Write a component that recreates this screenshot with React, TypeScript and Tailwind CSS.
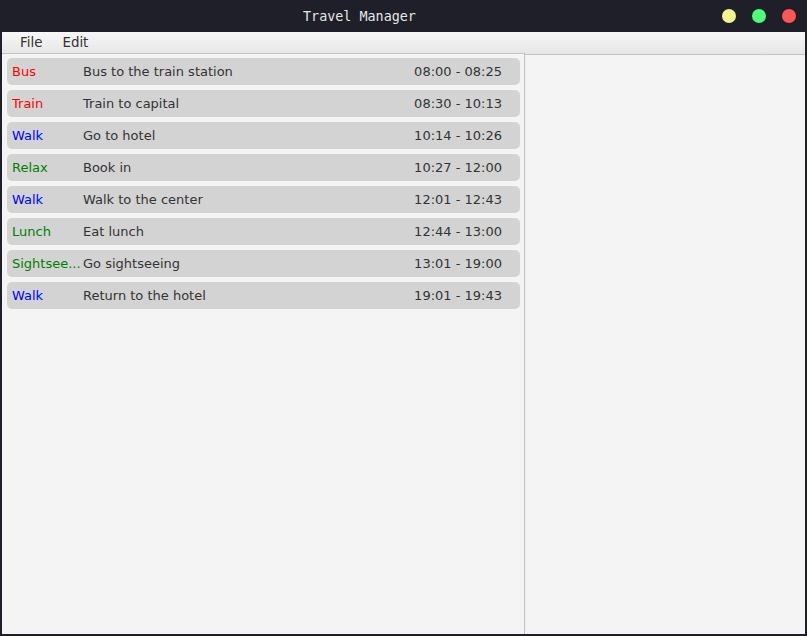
import React from 'react';

type Entry = { kind: string; color: string; text: string; time: string };

const ENTRIES: Entry[] = [
  { kind: 'Bus', color: 'text-[#ff0000]', text: 'Bus to the train station', time: '08:00 - 08:25' },
  { kind: 'Train', color: 'text-[#ff0000]', text: 'Train to capital', time: '08:30 - 10:13' },
  { kind: 'Walk', color: 'text-[#0000ff]', text: 'Go to hotel', time: '10:14 - 10:26' },
  { kind: 'Relax', color: 'text-[#008000]', text: 'Book in', time: '10:27 - 12:00' },
  { kind: 'Walk', color: 'text-[#0000ff]', text: 'Walk to the center', time: '12:01 - 12:43' },
  { kind: 'Lunch', color: 'text-[#008000]', text: 'Eat lunch', time: '12:44 - 13:00' },
  { kind: 'Sightseeing', color: 'text-[#008000]', text: 'Go sightseeing', time: '13:01 - 19:00' },
  { kind: 'Walk', color: 'text-[#0000ff]', text: 'Return to the hotel', time: '19:01 - 19:43' },
];

function Row({ entry }: { entry: Entry }) {
  return (
    <div className="h-[27px] flex items-center rounded-[5px] bg-[#d3d3d3] pl-[5px] pr-[18px] text-[13px]">
      <span className={`w-[71px] truncate ${entry.color}`}>
        {entry.kind === 'Sightseeing' ? 'Sightsee...' : entry.kind}
      </span>
      <span className="flex-1 text-[#333333]">{entry.text}</span>
      <span className="text-[#333333]">{entry.time}</span>
    </div>
  );
}

export default function App() {
  return (
    <div
      className="w-[807px] h-[636px] bg-[#1e1f29] flex flex-col"
      style={{ fontFamily: '"DejaVu Sans", sans-serif' }}
    >
      <div className="h-8 flex items-center shrink-0 relative">
        <div
          className="flex-1 text-center text-[13.4px] text-[#e6e6e6] pl-[2px] pr-[90px] mt-[2px]"
          style={{ fontFamily: '"DejaVu Sans Mono", monospace' }}
        >
          Travel Manager
        </div>
        <div className="absolute right-[11px] top-[9px] flex gap-4">
          <span className="w-[14px] h-[14px] rounded-full bg-[#f1f58f]" />
          <span className="w-[14px] h-[14px] rounded-full bg-[#50fa7b]" />
          <span className="w-[14px] h-[14px] rounded-full bg-[#ff5555]" />
        </div>
      </div>
      <div className="flex-1 mx-[2px] mb-[2px] bg-[#f4f4f4] flex flex-col min-h-0">
        <div className="h-[23px] shrink-0 flex items-center gap-[20px] pl-[18px] text-[13.4px] text-[#333333] bg-gradient-to-b from-[#f7f7f7] to-[#e6e6e6] border-b border-[#c2c2c2]">
          <span>File</span>
          <span>Edit</span>
        </div>
        <div className="flex-1 flex min-h-0">
          <div className="w-[523px] -mt-[2px] border-t border-r border-[#c2c2c2] bg-[#f4f4f4] pt-[4px] pl-[5px] pr-[4px] flex flex-col gap-[5px]">
            {ENTRIES.map((e, i) => (
              <Row key={i} entry={e} />
            ))}
          </div>
          <div className="flex-1" />
        </div>
      </div>
    </div>
  );
}
